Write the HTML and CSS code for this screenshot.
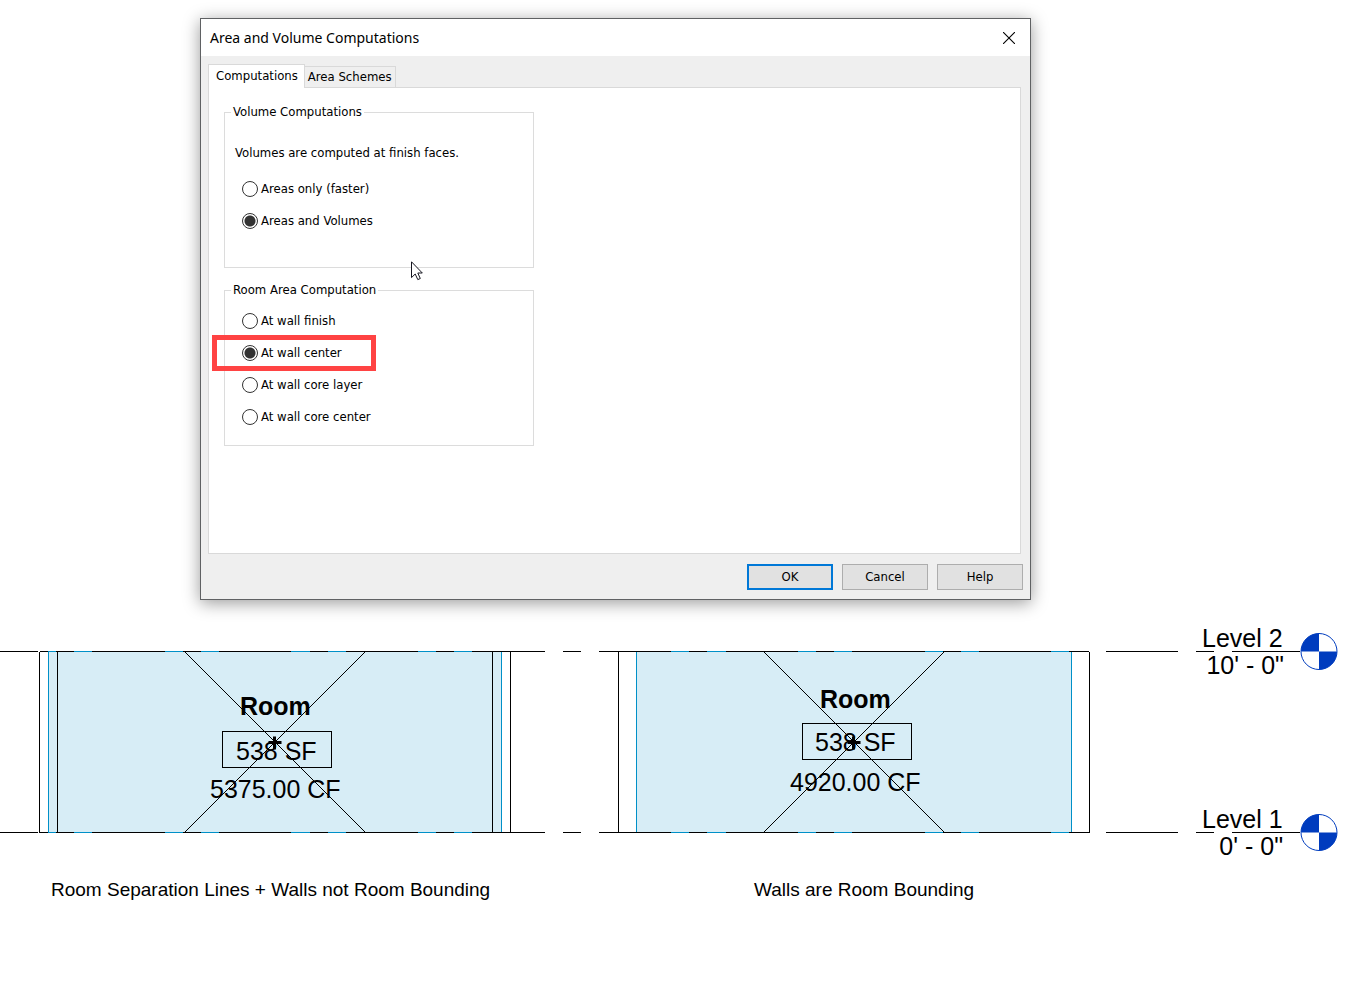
FILE: index.html
```html
<!DOCTYPE html>
<html lang="en">
<head>
<meta charset="utf-8">
<title>Area and Volume Computations</title>
<link rel="stylesheet" href="styles.css">
</head>
<body>
<main class="stage">
  <section class="dialog" role="dialog" aria-labelledby="dialog-title">
    <header class="titlebar">
      <h1 class="title" id="dialog-title">Area and Volume Computations</h1>
      <button class="close" type="button" aria-label="Close">
        <svg width="12" height="12" viewBox="0 0 12 12" aria-hidden="true"><path d="M0 0L12 12M12 0L0 12" stroke="#000" stroke-width="1.1" fill="none"/></svg>
      </button>
    </header>
    <form class="content">
      <div class="tabs" role="tablist">
        <button class="tab tab-active" type="button" role="tab" aria-selected="true">Computations</button>
        <button class="tab" type="button" role="tab" aria-selected="false">Area Schemes</button>
      </div>
      <div class="panel" role="tabpanel">
        <fieldset class="group group-volume">
          <legend>Volume Computations</legend>
          <p class="note">Volumes are computed at finish faces.</p>
          <label class="option"><input type="radio" name="volume"><span>Areas only (faster)</span></label>
          <label class="option"><input type="radio" name="volume" checked><span>Areas and Volumes</span></label>
          <svg class="pointer" width="12" height="20" viewBox="0 0 12 20" aria-hidden="true"><path d="M0.5 0.8V16.6L4.2 13L6.8 18.6L9.3 17.5L6.8 12H11.3Z" fill="#fff" stroke="#15151f" stroke-width="1"/></svg>
        </fieldset>
        <fieldset class="group group-area">
          <legend>Room Area Computation</legend>
          <label class="option"><input type="radio" name="area"><span>At wall finish</span></label>
          <label class="option option-marked"><input type="radio" name="area" checked><span>At wall center</span></label>
          <label class="option"><input type="radio" name="area"><span>At wall core layer</span></label>
          <label class="option"><input type="radio" name="area"><span>At wall core center</span></label>
        </fieldset>
      </div>
      <footer class="actions">
        <button class="action action-default" type="button">OK</button>
        <button class="action" type="button">Cancel</button>
        <button class="action" type="button">Help</button>
      </footer>
    </form>
  </section>

  <svg class="elevation" viewBox="0 600 1354 389" role="img" aria-label="Building section with two rooms">
    <defs>
      <path id="level-line" d="M0 0H38M40 0H48M56 0H74M92 0H165M183 0H201M219 0H291M310 0H328M346 0H418M436 0H454M472 0H545M563 0H581M599 0H671M689 0H707M726 0H798M816 0H834M852 0H925M943 0H961M979 0H1051M1069 0H1089M1106 0H1178M1196 0H1214M1232 0H1300"/>
      <g id="level-head">
        <path d="M0 0H-18A18 18 0 0 1 0 -18ZM0 0H18A18 18 0 0 1 0 18Z" class="head-fill"/>
        <circle r="18" class="head-ring"/>
      </g>
      <path id="room-cross" d="M-90 -90L90 90M90 -90L-90 90"/>
      <path id="room-center" d="M-6 0H7M0 -6V7"/>
    </defs>

    <rect class="room" x="48" y="651" width="454" height="181"/>
    <rect class="room" x="636" y="651" width="436" height="181"/>
    <path class="boundary" d="M48 651.5H502M48 832.5H502M636 651.5H1072M636 832.5H1072M48.5 652V832M501.5 652V832M636.5 652V832M1071.5 652V832"/>
    <path class="wall" d="M39.5 652V833M57.5 652V832M492.5 652V832M510.5 652V832M618.5 652V832M1089.5 652V833"/>
    <use href="#level-line" class="wall" y="651.5"/>
    <use href="#level-line" class="wall" y="832.5"/>

    <g class="tag">
      <text class="room-name" x="240" y="715">Room</text>
      <text x="236" y="760">538 SF</text>
      <text x="210" y="798">5375.00 CF</text>
      <rect class="wall" x="222.500" y="731.500" width="109" height="36"/>
      <text class="room-name" x="820" y="708">Room</text>
      <text x="815" y="751">538 SF</text>
      <text x="790" y="791">4920.00 CF</text>
      <rect class="wall" x="802.500" y="723.500" width="109" height="36"/>
    </g>
    <use href="#room-cross" class="cross" x="275" y="742"/>
    <use href="#room-cross" class="cross" x="854" y="742"/>
    <use href="#room-center" class="center" x="274.500" y="742.500"/>
    <use href="#room-center" class="center" x="853.500" y="742.500"/>

    <g class="tag">
      <text x="1202" y="647">Level 2</text>
      <text x="1284" y="674" text-anchor="end">10' - 0"</text>
      <text x="1202" y="828">Level 1</text>
      <text x="1283" y="855" text-anchor="end">0' - 0"</text>
    </g>
    <use href="#level-head" x="1319" y="651.5"/>
    <use href="#level-head" x="1319" y="832.5"/>

    <g class="caption">
      <text x="51" y="896">Room Separation Lines + Walls not Room Bounding</text>
      <text x="754" y="896">Walls are Room Bounding</text>
    </g>
  </svg>
</main>
</body>
</html>
```
FILE: styles.css
```css
* { box-sizing: border-box; }

body {
  margin: 0;
  background: #fff;
  color: #000;
  font: 13px/16px "DejaVu Sans Condensed", "DejaVu Sans", sans-serif;
  font-stretch: condensed;
}

button, input { font: inherit; color: inherit; margin: 0; }

.stage { padding-top: 18px; }

.dialog {
  position: relative;
  z-index: 1;
  margin: 0 323px 0 200px;
  min-width: 480px;
  border: 1px solid #5f6163;
  background: #efefef;
  box-shadow: 0 3px 16px rgba(0, 0, 0, 0.4);
}

.titlebar {
  display: flex;
  align-items: center;
  justify-content: space-between;
  height: 37px;
  padding: 0 8px 0 9px;
  background: #fff;
}

.title {
  margin: 0;
  font: 400 14px/20px "Noto Sans", "Open Sans", sans-serif;
}

.close {
  display: grid;
  place-items: center;
  width: 26px;
  height: 26px;
  padding: 0;
  border: 0;
  background: none;
}

.content { padding: 8px 7px 9px; }

.tabs { display: flex; align-items: flex-end; }

.tab {
  height: 21px;
  padding: 0 3px;
  border: 1px solid #d9d9d9;
  border-bottom: 0;
  border-left: 0;
  background: #efefef;
}

.tab-active {
  position: relative;
  height: 24px;
  margin-bottom: -1px;
  padding: 0 6px 2px 7px;
  border-left: 1px solid #d9d9d9;
  background: #fff;
}

.panel {
  display: flex;
  flex-direction: column;
  align-items: flex-start;
  gap: 14px;
  min-height: 467px;
  margin-right: 2px;
  padding: 16px 15px;
  border: 1px solid #d9d9d9;
  background: #fff;
}

.group {
  position: relative;
  width: 310px;
  margin: 0;
  padding: 0 6px;
  border: 1px solid #dcdcdc;
}

.group legend { padding: 0 2px; }
.group-volume { padding-bottom: 30px; }
.group-area { padding: 7px 6px 12px; }

.note { margin: 0; padding: 25px 4px 12px; }

.option {
  position: relative;
  display: flex;
  align-items: center;
  gap: 3px;
  width: fit-content;
  height: 32px;
  margin-left: 11px;
}

.option input {
  appearance: none;
  width: 16px;
  height: 16px;
  border: 1px solid #333;
  border-radius: 50%;
  background: #fff;
}

.option input:checked {
  background: radial-gradient(circle, #333 5px, #fff 6px);
}

.option-marked::after {
  content: "";
  box-sizing: border-box;
  position: absolute;
  top: -2px;
  left: -30px;
  width: 164px;
  height: 36px;
  border: 5px solid #ff4343;
}

.pointer {
  position: absolute;
  left: 186px;
  bottom: -14px;
  z-index: 1;
}

.actions {
  display: flex;
  justify-content: flex-end;
  gap: 9px;
  padding-top: 10px;
}

.action {
  width: 86px;
  height: 26px;
  padding: 0;
  border: 1px solid #adadad;
  background: #e1e1e1;
}

.action-default { border: 2px solid #0078d7; }

.elevation {
  display: block;
  width: 100%;
  font-family: "Liberation Sans", Arial, sans-serif;
}

.room { fill: #d7edf6; }
.boundary { fill: none; stroke: #0090c8; }
.wall { fill: none; stroke: #000; shape-rendering: crispEdges; }
.cross { fill: none; stroke: #000; shape-rendering: crispEdges; }
.center { fill: none; stroke: #000; stroke-width: 3px; }
.head-fill { fill: #003cbe; }
.head-ring { fill: none; stroke: #003cbe; }
.tag { font-size: 25px; }
.room-name { font-weight: 700; }
.caption { font-size: 19px; }
```
